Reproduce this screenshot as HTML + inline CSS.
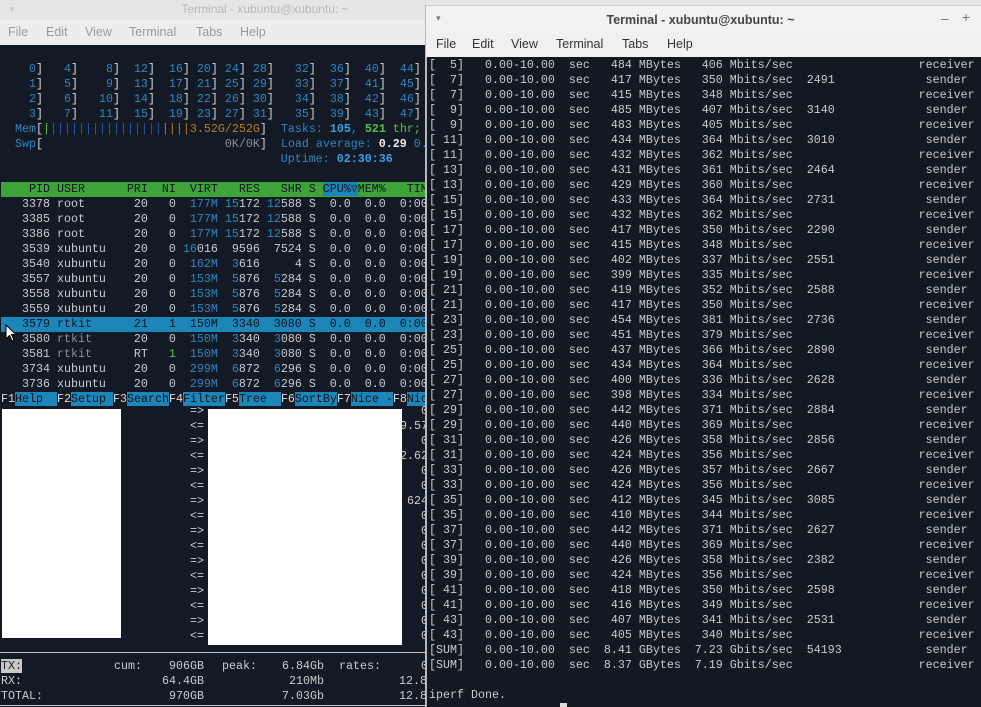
<!DOCTYPE html>
<html><head><meta charset="utf-8"><style>
*{margin:0;padding:0;box-sizing:border-box}
body{width:981px;height:707px;overflow:hidden;background:#131a25;position:relative;font-family:"Liberation Sans",sans-serif}
pre{font-family:"Liberation Mono",monospace;font-size:11.67px;line-height:15px;position:absolute;white-space:pre;color:#c9cbcd}
.abs{position:absolute}
.bl{color:#2f86bf}.w{color:#d8d8d8}.g{color:#55c046}.o{color:#c0781e}.dm{color:#8a8f96}.bb{color:#3a9ee0;font-weight:bold}.wb{color:#eee;font-weight:bold}
.sel{background:#1d86b8;color:#0c1520;display:inline-block;width:430px}
.hdr{background:#3ea43a;color:#0c1520;display:inline-block;width:430px}
.cpu{background:#1d86b8}
.k{color:#ddd}.l{background:#1d86b8;color:#0c1520}
.t{position:absolute;font-family:"Liberation Mono",monospace;font-size:11.67px;line-height:15px;color:#c9cbcd;white-space:pre}
.r{text-align:right}
</style></head><body>
<!-- left window chrome -->
<div class="abs" style="left:0;top:0;width:981px;height:20px;background:#e6e6e6"></div>
<div class="abs" style="left:0;top:2px;width:430px;text-align:center;font-size:12px;color:#b8b8b8;padding-left:100px">Terminal - xubuntu@xubuntu: ~</div>
<div class="abs" style="left:10px;top:4px;color:#c8c8c8;font-size:9px">▾</div>
<div class="abs" style="left:0;top:20px;width:430px;height:25px;background:#ededed"></div>
<div class="abs" style="left:0;top:25px;font-size:12.5px;color:#9a9a9a;word-spacing:0">
<span class="abs" style="left:8px">File</span><span class="abs" style="left:46px">Edit</span><span class="abs" style="left:85px">View</span><span class="abs" style="left:129px">Terminal</span><span class="abs" style="left:196px">Tabs</span><span class="abs" style="left:240px">Help</span></div>

<pre style="left:1px;top:62px"><span class="bl">    0<span class="w">]</span>   4<span class="w">]</span>    8<span class="w">]</span>  12<span class="w">]</span>  16<span class="w">]</span> 20<span class="w">]</span> 24<span class="w">]</span> 28<span class="w">]</span>   32<span class="w">]</span>  36<span class="w">]</span>  40<span class="w">]</span>  44<span class="w">]</span>
    1<span class="w">]</span>   5<span class="w">]</span>    9<span class="w">]</span>  13<span class="w">]</span>  17<span class="w">]</span> 21<span class="w">]</span> 25<span class="w">]</span> 29<span class="w">]</span>   33<span class="w">]</span>  37<span class="w">]</span>  41<span class="w">]</span>  45<span class="w">]</span>
    2<span class="w">]</span>   6<span class="w">]</span>   10<span class="w">]</span>  14<span class="w">]</span>  18<span class="w">]</span> 22<span class="w">]</span> 26<span class="w">]</span> 30<span class="w">]</span>   34<span class="w">]</span>  38<span class="w">]</span>  42<span class="w">]</span>  46<span class="w">]</span>
    3<span class="w">]</span>   7<span class="w">]</span>   11<span class="w">]</span>  15<span class="w">]</span>  19<span class="w">]</span> 23<span class="w">]</span> 27<span class="w">]</span> 31<span class="w">]</span>   35<span class="w">]</span>  39<span class="w">]</span>  43<span class="w">]</span>  47<span class="w">]</span></span>
  <span class="bl">Mem</span><span class="w">[</span><span class="g">|</span><span style="color:#2a55b0">||||||||||||||||</span><span class="o">||||3.52G/252G</span><span class="w">]</span>  <span class="bl">Tasks: </span><span class="bb">105</span><span class="bl">, </span><span class="g" style="font-weight:bold">521</span><span class="g"> thr;</span>
  <span class="bl">Swp</span><span class="w">[</span>                          <span class="dm">0K/0K</span><span class="w">]</span>  <span class="bl">Load average: </span><span class="wb">0.29</span> <span class="bl">0.</span>
                                        <span class="bl">Uptime: </span><span class="bb">02:30:36</span>

<span class="hdr">    PID USER      PRI  NI  VIRT   RES   SHR S <span class="cpu">CPU%▽</span>MEM%   TIME+</span>
   3378 root       20   0  <span class="bl">177M</span> <span class="bl">15</span>172 <span class="bl">12</span>588 S  0.0  0.0  0:00
   3385 root       20   0  <span class="bl">177M</span> <span class="bl">15</span>172 <span class="bl">12</span>588 S  0.0  0.0  0:00
   3386 root       20   0  <span class="bl">177M</span> <span class="bl">15</span>172 <span class="bl">12</span>588 S  0.0  0.0  0:00
   3539 xubuntu    20   0 <span class="bl">16</span>016  9596  7524 S  0.0  0.0  0:00
   3540 xubuntu    20   0  <span class="bl">162M</span>  <span class="bl">3</span>616     4 S  0.0  0.0  0:00
   3557 xubuntu    20   0  <span class="bl">153M</span>  <span class="bl">5</span>876  <span class="bl">5</span>284 S  0.0  0.0  0:00
   3558 xubuntu    20   0  <span class="bl">153M</span>  <span class="bl">5</span>876  <span class="bl">5</span>284 S  0.0  0.0  0:00
   3559 xubuntu    20   0  <span class="bl">153M</span>  <span class="bl">5</span>876  <span class="bl">5</span>284 S  0.0  0.0  0:00
<span class="sel">   3579 rtkit      21   1  150M  3340  3080 S  0.0  0.0  0:00</span>
   3580 <span class="dm">rtkit</span>      20   0  <span class="bl">150M</span>  <span class="bl">3</span>340  <span class="bl">3</span>080 S  0.0  0.0  0:00
   3581 <span class="dm">rtkit</span>      RT   <span class="g">1</span>  <span class="bl">150M</span>  <span class="bl">3</span>340  <span class="bl">3</span>080 S  0.0  0.0  0:00
   3734 xubuntu    20   0  <span class="bl">299M</span>  <span class="bl">6</span>872  <span class="bl">6</span>296 S  0.0  0.0  0:00
   3736 xubuntu    20   0  <span class="bl">299M</span>  <span class="bl">6</span>872  <span class="bl">6</span>296 S  0.0  0.0  0:00
</pre>
<pre style="left:1px;top:392px"><span class="k">F1</span><span class="l">Help  </span><span class="k">F2</span><span class="l">Setup </span><span class="k">F3</span><span class="l">Search</span><span class="k">F4</span><span class="l">Filter</span><span class="k">F5</span><span class="l">Tree  </span><span class="k">F6</span><span class="l">SortBy</span><span class="k">F7</span><span class="l">Nice -</span><span class="k">F8</span><span class="l">Nice +</span></pre>

<!-- iftop area -->
<div class="abs" style="left:2px;top:409px;width:119px;height:229px;background:#fff"></div>
<div class="abs" style="left:208px;top:409px;width:194px;height:236px;background:#fff"></div>
<pre style="left:190px;top:404px;color:#ccc">=>
&lt;=
=>
&lt;=
=>
&lt;=
=>
&lt;=
=>
&lt;=
=>
&lt;=
=>
&lt;=
=>
&lt;=</pre>
<pre style="left:400px;top:404px;color:#ccc">   0
9.57
   0
2.62
   0
   0
 624
   0
   0
   0
   0
   0
   0
   0
   0
   0</pre>
<div class="abs" style="left:0;top:652px;width:426px;height:1px;background:#c8c8c8"></div>
<div class="abs" style="left:0;top:705px;width:426px;height:1px;background:#c8c8c8"></div>
<div class="t" style="left:1px;top:659px"><span style="background:#c8c8c8;color:#222">TX:</span></div>
<div class="t" style="left:1px;top:674px">RX:</div>
<div class="t" style="left:1px;top:689px">TOTAL:</div>
<div class="t" style="left:114px;top:659px">cum:</div>
<div class="t" style="left:222px;top:659px">peak:</div>
<div class="t" style="left:339px;top:659px">rates:</div>
<div class="t r" style="left:100px;width:104px;top:659px">906GB</div>
<div class="t r" style="left:100px;width:104px;top:674px">64.4GB</div>
<div class="t r" style="left:100px;width:104px;top:689px">970GB</div>
<div class="t r" style="left:200px;width:124px;top:659px">6.84Gb</div>
<div class="t r" style="left:200px;width:124px;top:674px">210Mb</div>
<div class="t r" style="left:200px;width:124px;top:689px">7.03Gb</div>
<div class="t" style="left:421px;top:659px">0</div>
<div class="t" style="left:399px;top:674px">12.8</div>
<div class="t" style="left:399px;top:689px">12.8</div>

<!-- right window -->
<div class="abs" style="left:425px;top:5px;width:556px;height:702px;background:#121923;border-left:2px solid #b8b8b8"></div>
<div class="abs" style="left:426px;top:5px;width:555px;height:28px;background:#f2f2f2;border-top:1px solid #ccc"></div>
<div class="abs" style="left:426px;top:33px;width:555px;height:24px;background:#f0f0f0"></div>
<div class="abs" style="left:436px;top:13px;font-size:9px;color:#777">▾</div>
<div class="abs" style="left:426px;top:13px;width:555px;text-align:center;font-size:12.5px;color:#454545;font-weight:bold;padding-right:6px">Terminal - xubuntu@xubuntu: ~</div>
<div class="abs" style="left:941px;top:10px;font-size:14px;color:#777">–</div>
<div class="abs" style="left:962px;top:9px;font-size:14px;color:#777">+</div>
<div class="abs" style="left:0;top:37px;font-size:12.5px;color:#333">
<span class="abs" style="left:436px">File</span><span class="abs" style="left:472px">Edit</span><span class="abs" style="left:511px">View</span><span class="abs" style="left:556px">Terminal</span><span class="abs" style="left:622px">Tabs</span><span class="abs" style="left:667px">Help</span></div>
<pre style="left:429px;top:58px">[  5]   0.00-10.00  sec   484 MBytes   406 Mbits/sec                  receiver
[  7]   0.00-10.00  sec   417 MBytes   350 Mbits/sec  2491             sender
[  7]   0.00-10.00  sec   415 MBytes   348 Mbits/sec                  receiver
[  9]   0.00-10.00  sec   485 MBytes   407 Mbits/sec  3140             sender
[  9]   0.00-10.00  sec   483 MBytes   405 Mbits/sec                  receiver
[ 11]   0.00-10.00  sec   434 MBytes   364 Mbits/sec  3010             sender
[ 11]   0.00-10.00  sec   432 MBytes   362 Mbits/sec                  receiver
[ 13]   0.00-10.00  sec   431 MBytes   361 Mbits/sec  2464             sender
[ 13]   0.00-10.00  sec   429 MBytes   360 Mbits/sec                  receiver
[ 15]   0.00-10.00  sec   433 MBytes   364 Mbits/sec  2731             sender
[ 15]   0.00-10.00  sec   432 MBytes   362 Mbits/sec                  receiver
[ 17]   0.00-10.00  sec   417 MBytes   350 Mbits/sec  2290             sender
[ 17]   0.00-10.00  sec   415 MBytes   348 Mbits/sec                  receiver
[ 19]   0.00-10.00  sec   402 MBytes   337 Mbits/sec  2551             sender
[ 19]   0.00-10.00  sec   399 MBytes   335 Mbits/sec                  receiver
[ 21]   0.00-10.00  sec   419 MBytes   352 Mbits/sec  2588             sender
[ 21]   0.00-10.00  sec   417 MBytes   350 Mbits/sec                  receiver
[ 23]   0.00-10.00  sec   454 MBytes   381 Mbits/sec  2736             sender
[ 23]   0.00-10.00  sec   451 MBytes   379 Mbits/sec                  receiver
[ 25]   0.00-10.00  sec   437 MBytes   366 Mbits/sec  2890             sender
[ 25]   0.00-10.00  sec   434 MBytes   364 Mbits/sec                  receiver
[ 27]   0.00-10.00  sec   400 MBytes   336 Mbits/sec  2628             sender
[ 27]   0.00-10.00  sec   398 MBytes   334 Mbits/sec                  receiver
[ 29]   0.00-10.00  sec   442 MBytes   371 Mbits/sec  2884             sender
[ 29]   0.00-10.00  sec   440 MBytes   369 Mbits/sec                  receiver
[ 31]   0.00-10.00  sec   426 MBytes   358 Mbits/sec  2856             sender
[ 31]   0.00-10.00  sec   424 MBytes   356 Mbits/sec                  receiver
[ 33]   0.00-10.00  sec   426 MBytes   357 Mbits/sec  2667             sender
[ 33]   0.00-10.00  sec   424 MBytes   356 Mbits/sec                  receiver
[ 35]   0.00-10.00  sec   412 MBytes   345 Mbits/sec  3085             sender
[ 35]   0.00-10.00  sec   410 MBytes   344 Mbits/sec                  receiver
[ 37]   0.00-10.00  sec   442 MBytes   371 Mbits/sec  2627             sender
[ 37]   0.00-10.00  sec   440 MBytes   369 Mbits/sec                  receiver
[ 39]   0.00-10.00  sec   426 MBytes   358 Mbits/sec  2382             sender
[ 39]   0.00-10.00  sec   424 MBytes   356 Mbits/sec                  receiver
[ 41]   0.00-10.00  sec   418 MBytes   350 Mbits/sec  2598             sender
[ 41]   0.00-10.00  sec   416 MBytes   349 Mbits/sec                  receiver
[ 43]   0.00-10.00  sec   407 MBytes   341 Mbits/sec  2531             sender
[ 43]   0.00-10.00  sec   405 MBytes   340 Mbits/sec                  receiver
[SUM]   0.00-10.00  sec  8.41 GBytes  7.23 Gbits/sec  54193            sender
[SUM]   0.00-10.00  sec  8.37 GBytes  7.19 Gbits/sec                  receiver

iperf Done.</pre>
<div class="abs" style="left:560px;top:703px;width:7px;height:4px;background:#ddd"></div>
<!-- mouse cursor -->
<svg class="abs" style="left:5px;top:324px" width="14" height="20" viewBox="0 0 14 20"><path d="M1 1 L1 15 L4.5 11.5 L7 17 L9 16 L6.5 10.5 L11 10.5 Z" fill="#fff" stroke="#000" stroke-width="1"/></svg>
</body></html>
